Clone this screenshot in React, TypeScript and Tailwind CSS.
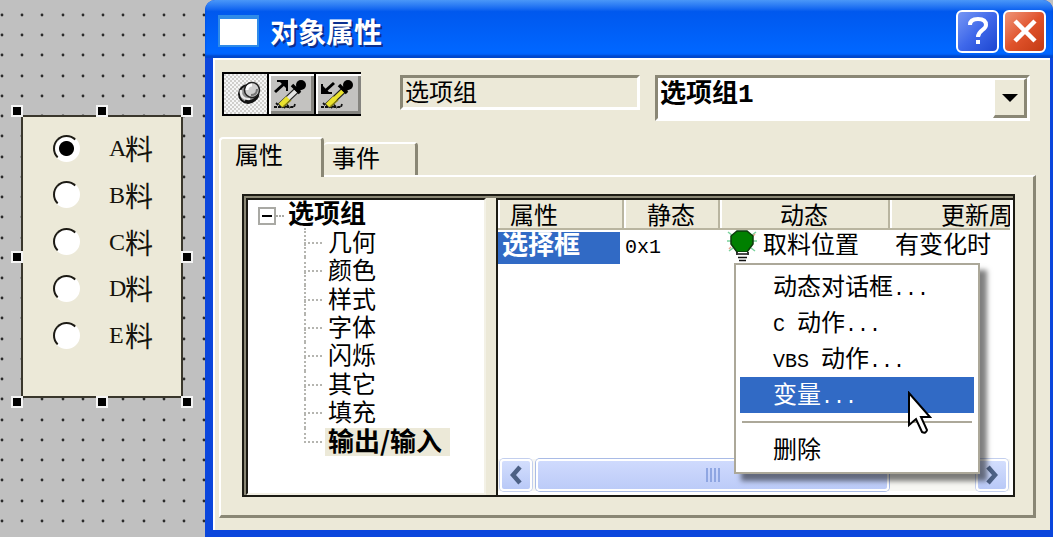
import { useState } from "react";

const CJK = "font-['Noto_Sans_CJK_SC',sans-serif]";

const options = ["A", "B", "C", "D", "E"];

const treeItems = [
  "几何",
  "颜色",
  "样式",
  "字体",
  "闪烁",
  "其它",
  "填充",
  "输出/输入",
];

const menuItems = ["动态对话框...", "C 动作...", "VBS 动作...", "变量..."];

// Latin runs are set in a half-width face next to the full-width characters
const MixedText = ({ text }: { text: string }) => (
  <>
    {text.split(/([\x20-\x7e]+)/).map((part, i) =>
      i % 2 === 1 ? (
        <span
          key={i}
          className="whitespace-pre font-['Liberation_Mono',monospace] text-[20px]"
        >
          {part}
        </span>
      ) : (
        part
      )
    )}
  </>
);

const GridDots = () => {
  const cells = Array.from({ length: 11 * 60 }, (_, i) => i);
  return (
    <svg className="absolute inset-0 h-full w-full" aria-hidden="true">
      {cells.map((i) => (
        <circle
          key={i}
          cx={2 + Math.round((i % 11) * 20.23)}
          cy={15 + Math.round(Math.floor(i / 11) * 20.23)}
          r="1.4"
          fill="#2a2a2a"
        />
      ))}
    </svg>
  );
};

const handles = [
  "left-[-12px] top-[-12px]",
  "left-[73px] top-[-12px]",
  "right-[-12px] top-[-12px]",
  "left-[-12px] top-[134px]",
  "right-[-12px] top-[134px]",
  "left-[-12px] bottom-[-12px]",
  "left-[73px] bottom-[-12px]",
  "right-[-12px] bottom-[-12px]",
];

const OptionGroup = () => {
  const [value, setValue] = useState("A");
  return (
    <div className="relative mt-[115px] ml-[21px] w-[162px] border-2 border-[#3a372c] bg-[#ece9d8] pt-[18px] pb-[48px] pl-[30px]">
      <div className="flex h-[213px] flex-col justify-between">
        {options.map((name) => (
          <label key={name} className="flex h-[26px] items-center">
            <input
              type="radio"
              name="material"
              checked={value === name}
              onChange={() => setValue(name)}
              className="h-[27px] w-[27px] shrink-0 appearance-none rounded-full border-2 border-t-[#1c1a14] border-r-white border-b-white border-l-[#1c1a14] bg-white checked:bg-[radial-gradient(circle,#000_7px,#fff_8px)]"
            />
            <span className="ml-[29px] flex items-center text-[28px] leading-[28px] text-[#15130c]">
              <span className="w-4 font-['Liberation_Serif',serif] text-[24px]">
                {name}
              </span>
              料
            </span>
          </label>
        ))}
      </div>
      {handles.map((place) => (
        <span
          key={place}
          className={`absolute h-3 w-3 border-2 border-[#f4f4f4] bg-black ${place}`}
        />
      ))}
    </div>
  );
};

const PinIcon = () => (
  <svg width="43" height="40" viewBox="2 2 43 40" aria-hidden="true">
    <circle cx="26" cy="22" r="9" fill="#8a8a8a" stroke="#111" strokeWidth="2" />
    <path d="M19 18c-1 6 3 10 9 9" fill="none" stroke="#e8e8e8" strokeWidth="2.5" />
    <path d="M23 29c5 2 12-1 13-7" fill="none" stroke="#111" strokeWidth="3" />
    <circle cx="30" cy="18" r="7.5" fill="#cfcfcf" stroke="#222" strokeWidth="1.5" />
    <path d="M25 18c0-3 2-5 5-5" fill="none" stroke="#fff" strokeWidth="3" />
    <path d="M29 23c4 0 6-2 6-6" fill="none" stroke="#777" strokeWidth="2" />
  </svg>
);

const DropperIcon = ({ filled }: { filled: boolean }) => (
  <svg width="43" height="40" viewBox="2 2 43 40" aria-hidden="true">
    {filled ? (
      <>
        <path d="M20 11 10 20" stroke="#000" strokeWidth="3" />
        <path d="M7 12v10h11v-2h-3l-6-6v-2z" fill="#000" />
      </>
    ) : (
      <>
        <path d="M8 20 18 11" stroke="#000" strokeWidth="3" />
        <path d="M10 8h11v11h-2v-3l-6-6h-3z" fill="#000" />
      </>
    )}
    <path d="M7 35h5l2-2M9 31l4 4h14l1-3M17 36l3-3 3 3" fill="none" stroke="#111" strokeWidth="1.8" strokeDasharray="3 1" />
    <path d="M13 34 31 17" stroke="#222" strokeWidth="6.5" />
    <path d="M14 33 31 17" stroke={filled ? "#eae22e" : "#e4e4e4"} strokeWidth="4" />
    <path d="M13.500 33.500 21 26" stroke="#eae22e" strokeWidth="5" />
    <path d="M16 35 24 28" stroke="#8b8512" strokeWidth="1.5" />
    <path d="m25 13 8 8" stroke="#000" strokeWidth="3.500" />
    <circle cx="34" cy="13" r="5" fill="#000" />
    <path d="m27 17 5-5 4 4-5 5z" fill="#000" />
  </svg>
);

const BulbIcon = () => (
  <svg width="30" height="32" viewBox="0 0 30 32" className="shrink-0" aria-hidden="true">
    <path d="M1 2l5 4M29 2l-5 4M0 11h4M26 11h4M2 21l4-3M28 21l-4-3" stroke="#79d29c" strokeWidth="1.5" />
    <path d="M2 19l2-2M28 4l-2 2" stroke="#eaa68e" strokeWidth="1.5" />
    <path d="M10 1h10l6 5v8l-3 4-3 4H10l-3-4-3-4V6z" fill="#008000" stroke="#0c3a0c" strokeWidth="1.5" />
    <path d="M10 22h11v3l-1 5-3 2h-4l-3-2z" fill="#fff" />
    <path d="M10 22v3M21 22v3M11 24h9M11 27.500h9M12 30.500h7" stroke="#111" strokeWidth="1.7" />
  </svg>
);

const Cursor = () => (
  <svg width="26" height="44" viewBox="0 0 26 44" aria-hidden="true" className="pointer-events-none absolute top-[126px] left-[171px]">
    <path d="M2 2v32l7-6 6 13q4 2 5-2l-6-13h9z" fill="#fff" stroke="#000" strokeWidth="2" />
  </svg>
);

const Toolbar = () => (
  <div className="flex items-start pr-5 pl-[9px]">
    <div className="flex h-11 border-2 border-r-0 border-black">
      <button
        type="button"
        aria-label="固定"
        className="w-[45px] border-r-2 border-black bg-[repeating-conic-gradient(#f6f6f6_0_25%,#d0cfcc_0_50%)] bg-[length:4px_4px]"
      >
        <PinIcon />
      </button>
      <button type="button" aria-label="复制属性" className="w-[47px] border-r-2 border-black bg-[#c3c2c0] shadow-[inset_2px_2px_0_#fff,inset_-3px_-3px_0_#85847f]">
        <DropperIcon filled={false} />
      </button>
      <button type="button" aria-label="粘贴属性" className="w-[45px] bg-[#c3c2c0] shadow-[inset_2px_2px_0_#fff,inset_-3px_-3px_0_#85847f]">
        <DropperIcon filled />
      </button>
    </div>
    <input
      readOnly
      aria-label="对象类型"
      value="选项组"
      className="mt-[3px] ml-[39px] h-[35px] w-[240px] border-[3px] border-t-[#8a8775] border-r-white border-b-white border-l-[#8a8775] bg-[#ece9d8] pb-1 pl-0.5 text-[24px] leading-[24px] outline-none"
    />
    <div className="relative mt-[3px] ml-[15px] h-[46px] flex-1">
      <select
        aria-label="对象名称"
        className="h-full w-full appearance-none border-[3px] border-t-[#8a8775] border-r-white border-b-white border-l-[#8a8775] bg-white pb-1.5 pl-0.5 font-['Liberation_Mono','Noto_Sans_CJK_SC',monospace] text-[26px] leading-[30px] font-bold outline-none"
      >
        <option>选项组1</option>
      </select>
      <span className="pointer-events-none absolute top-[3px] right-[3px] bottom-[3px] flex w-[34px] items-center justify-center border-2 border-r-[3px] border-b-[3px] border-t-white border-r-[#8a8775] border-b-[#8a8775] border-l-white bg-[#ece9d8]">
        <svg width="16" height="8" viewBox="0 0 16 8" aria-hidden="true">
          <path d="M0 0h16L8 8z" fill="#000" />
        </svg>
      </span>
    </div>
  </div>
);

const PropertyTree = () => (
  <div className="mr-[10px] w-[240px] shrink-0 border-t-2 border-r-2 border-b-2 border-l-2 border-t-[#1c1b14] border-r-[#f3f1e6] border-b-[#f3f1e6] border-l-[#1c1b14] bg-white">
    <ul className="flex h-[256px] flex-col text-[24px] leading-[24px]">
      <li className="flex flex-1 items-center pl-[10px]">
        <button
          type="button"
          aria-label="折叠"
          className="mt-1 flex h-[18px] w-[18px] items-center justify-center border-2 border-[#a9a9a4]"
        >
          <span className="h-0.5 w-2.5 bg-black" />
        </button>
        <span className="mt-1 mr-1 w-2 border-b-2 border-dotted border-[#a9a9a4]" />
        <span className="pb-1 text-[26px] font-bold">选项组</span>
      </li>
      {treeItems.map((item, i) => {
        const last = i === treeItems.length - 1;
        return (
          <li key={item} className="flex flex-1 items-center pl-[56px]">
            <span className="mr-[3px] flex w-[18px] flex-col self-stretch">
              <span className="flex-1 border-b-2 border-l-2 border-dotted border-[#b5b5b0]" />
              <span
                className={
                  last
                    ? "flex-1"
                    : "flex-1 border-l-2 border-dotted border-[#b5b5b0]"
                }
              />
            </span>
            <span
              className={
                last
                  ? "bg-[#ece9d8] pr-2 pb-1 pl-[3px] text-[26px] leading-[24px] font-bold"
                  : "pb-1 pl-[3px]"
              }
            >
              {item}
            </span>
          </li>
        );
      })}
    </ul>
  </div>
);

const TH =
  "h-[30px] border-r-2 border-b-2 border-[#b9b5a0] bg-[#ece9d8] p-0 text-center font-normal shadow-[inset_2px_0_0_#fff]";

const PropertyTable = () => (
  <div className="mr-[3px] overflow-hidden">
    <table className="w-[592px] table-fixed border-separate border-spacing-0 text-[24px] leading-[26px]">
      <colgroup>
        <col className="w-[126px]" />
        <col className="w-[96px]" />
        <col className="w-[170px]" />
        <col className="w-[200px]" />
      </colgroup>
      <thead>
        <tr>
          <th className={`${TH} pl-3 !text-left`}>属性</th>
          <th className={TH}>静态</th>
          <th className={TH}>动态</th>
          <th className={TH}>更新周期</th>
        </tr>
      </thead>
      <tbody>
        <tr className="align-top">
          <td className="p-0 pt-0.5">
            <div className="h-8 w-[122px] bg-[#316ac5] pl-1 text-[26px] leading-[22px] font-bold text-white">
              选择框
            </div>
          </td>
          <td className="p-0 pl-[1px]">
            <MixedText text="0x1" />
          </td>
          <td className="p-0 pl-[7px]">
            <div className="flex items-start gap-1.5">
              <BulbIcon />
              取料位置
            </div>
          </td>
          <td className="p-0 pl-[5px]">有变化时</td>
        </tr>
      </tbody>
    </table>
  </div>
);

const SCROLL_BUTTON =
  "flex w-8 shrink-0 items-center justify-center rounded-[4px] border-2 border-white bg-linear-to-b from-[#d3defd] to-[#b9c9f7] shadow-[0_0_0_1px_#c3cfee]";

const ScrollBar = () => (
  <div className="mt-auto mr-[3px] mb-1 flex h-[32px] bg-[#f7f7f3] px-0.5">
    <button type="button" aria-label="向左滚动" className={SCROLL_BUTTON}>
      <svg width="14" height="20" viewBox="0 0 14 20" aria-hidden="true">
        <path d="M11 2 4 10l7 8" fill="none" stroke="#4d6185" strokeWidth="4.5" />
      </svg>
    </button>
    <div className="ml-1 flex w-[353px] items-center justify-center gap-0.5 rounded-[4px] border-2 border-white bg-linear-to-b from-[#cfdafd] to-[#bccbf8] shadow-[0_0_0_1px_#a9bbe6]">
      {[0, 1, 2, 3].map((i) => (
        <span key={i} className="h-3.5 w-0.5 bg-[#8fa6e2]" />
      ))}
    </div>
    <button type="button" aria-label="向右滚动" className={`${SCROLL_BUTTON} ml-auto`}>
      <svg width="14" height="20" viewBox="0 0 14 20" aria-hidden="true">
        <path d="m3 2 7 8-7 8" fill="none" stroke="#4d6185" strokeWidth="4.5" />
      </svg>
    </button>
  </div>
);

const ContextMenu = () => (
  <div
    role="menu"
    className="absolute top-[63px] left-[236px] w-[246px] border-2 border-[#aca899] bg-white p-1 shadow-[7px_7px_5px_rgba(0,0,0,0.5)]"
  >
    {menuItems.map((item) => (
      <button
        key={item}
        type="button"
        role="menuitem"
        className={`block h-9 w-full pb-1 pl-[33px] text-left text-[24px] leading-8 ${
          item === "变量..." ? "bg-[#316ac5] text-white" : "text-black"
        }`}
      >
        <MixedText text={item} />
      </button>
    ))}
    <div className="mx-0.5 my-2 h-0.5 bg-[#aca899]" />
    <button
      type="button"
      role="menuitem"
      className="block h-[37px] w-full pb-1 pl-[33px] text-left text-[24px] leading-8"
    >
      删除
    </button>
    <Cursor />
  </div>
);

const TitleBar = () => (
  <header className="flex h-[58px] items-center bg-linear-to-b from-[#4a97f8] via-[#0058ee] via-20% to-[#0066ff] to-85% pt-1 pr-[7px] pl-[13px] shadow-[inset_0_-3px_2px_#0047cc]">
    <span className="h-8 w-[41px] border-2 border-t-4 border-[#2f8be8] bg-white" />
    <h1 className="ml-[11px] text-[28px] leading-[34px] font-bold text-white [text-shadow:2px_2px_0_#0b2f8f]">
      对象属性
    </h1>
    <div className="ml-auto flex gap-1">
      <button
        type="button"
        aria-label="帮助"
        className="flex h-[43px] w-[43px] items-center justify-center rounded-[6px] border-2 border-white bg-linear-to-br from-[#7796f4] via-[#3f68ea] to-[#1c45d0]"
      >
        <svg width="26" height="30" viewBox="0 0 26 30" aria-hidden="true">
          <path d="M5 9c0-4 3-6 8-6s8 2 8 6c0 5-8 5-8 12" fill="none" stroke="#fff" strokeWidth="4" />
          <path d="M11 24h4v4h-4z" fill="#fff" />
        </svg>
      </button>
      <button
        type="button"
        aria-label="关闭"
        className="flex h-[43px] w-[43px] items-center justify-center rounded-[6px] border-2 border-white bg-linear-to-br from-[#ee9478] via-[#e0532b] to-[#c43a12]"
      >
        <svg width="26" height="26" viewBox="0 0 26 26" aria-hidden="true">
          <path d="M3 3l20 20M23 3 3 23" stroke="#fff" strokeWidth="4.5" />
        </svg>
      </button>
    </div>
  </header>
);

const PropertiesDialog = () => (
  <section className="flex flex-1 flex-col overflow-hidden rounded-t-[10px] bg-[#0b46dc]">
    <TitleBar />
    <div className="mr-[3px] mb-[7px] ml-2 flex flex-1 flex-col border-t-2 border-l-2 border-white bg-[#ece9d8] pt-3 pb-3">
      <div className="-ml-0.5 flex flex-1 flex-col">
        <Toolbar />
        <div role="tablist" className="mt-4 ml-1.5 flex items-end text-[24px] leading-[26px]">
          <button
            type="button"
            role="tab"
            aria-selected="true"
            className="relative z-10 -mb-0.5 h-10 w-[105px] rounded-t-[4px] border-t-2 border-r-[3px] border-l-2 border-t-white border-r-[#8a8775] border-l-white bg-[#ece9d8] pb-2 pl-3.5 text-left"
          >
            属性
          </button>
          <button
            type="button"
            role="tab"
            aria-selected="false"
            className="h-[33px] w-[94px] rounded-t-[4px] border-t-2 border-r-[3px] border-t-white border-r-[#8a8775] pb-1.5 pl-2 text-left"
          >
            事件
          </button>
        </div>
        <div className="mr-3.5 ml-1.5 flex flex-1 flex-col border-t-2 border-r-[3px] border-b-[3px] border-l-2 border-t-white border-r-[#8a8775] border-b-[#8a8775] border-l-white pt-[17px] pr-[18px] pb-[18px] pl-[21px]">
          <div className="flex flex-1 border-2 border-[#1c1b14]">
            <div className="flex min-w-0 flex-1 border-t-2 border-l-2 border-[#8a8775]">
              <PropertyTree />
              <div className="relative flex min-w-0 flex-1 flex-col border-t-2 border-l-2 border-[#1c1b14] bg-white">
                <PropertyTable />
                <ScrollBar />
                <ContextMenu />
              </div>
            </div>
          </div>
        </div>
      </div>
    </div>
  </section>
);

const App: React.FC = () => (
  <main className={`flex min-h-screen bg-[#c0c0c0] text-black ${CJK}`}>
    <div className="relative w-[205px] shrink-0 overflow-hidden">
      <GridDots />
      <OptionGroup />
    </div>
    <PropertiesDialog />
  </main>
);

export default App;
